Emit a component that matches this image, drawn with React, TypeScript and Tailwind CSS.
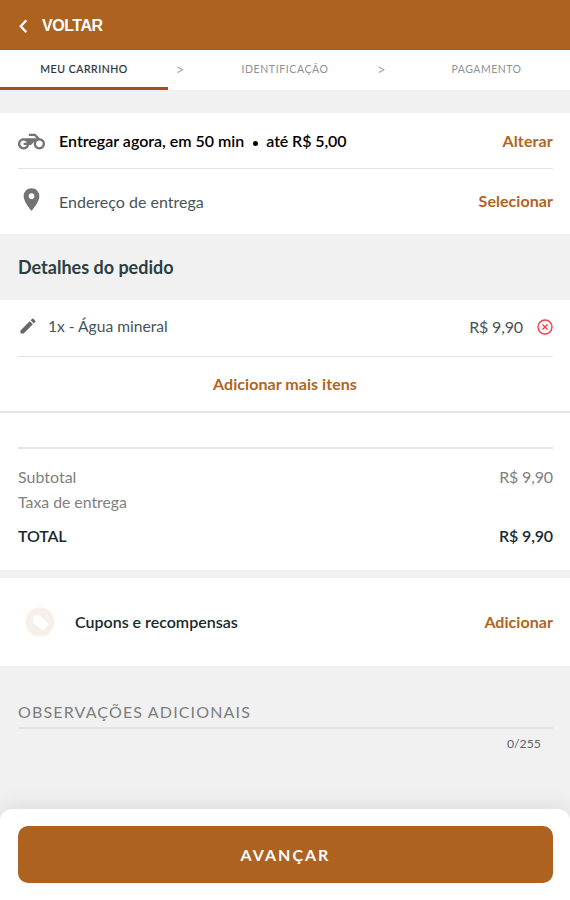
import React from "react";
import { MdPlace, MdEdit } from "react-icons/md";

function Motorcycle() {
  return (
    <svg width="27" height="27" viewBox="0 0 24 24" fill="#737373" className="mt-[2px]">
      <path d="M19.44 9.03L15.41 5H9.6v2h4.99l2 2H5c-2.8 0-5 2.2-5 5s2.2 5 5 5c2.46 0 4.45-1.69 4.9-4h1.65l2.77-2.77c-.21.54-.32 1.14-.32 1.77 0 2.8 2.2 5 5 5s5-2.2 5-5c0-2.65-1.97-4.77-4.56-4.97zM7.82 15C7.4 16.15 6.28 17 5 17c-1.63 0-3-1.37-3-3s1.37-3 3-3c1.28 0 2.4.85 2.82 2H5v2h2.82zM19 17c-1.66 0-3-1.34-3-3s1.34-3 3-3 3 1.34 3 3-1.34 3-3 3z" />
    </svg>
  );
}

function Header() {
  return (
    <header className="flex h-[50px] items-center bg-[#ad621f] pl-[19px] text-white">
      <svg width="9" height="15" viewBox="0 0 9 15" fill="none" stroke="currentColor" strokeWidth="2.4" className="mt-[3px]">
        <path d="M7.3 1.2 1.8 7.2l5.5 6" />
      </svg>
      <span className="ml-[14px] mt-px font-['Liberation_Sans',sans-serif] text-[16px] font-bold leading-5 tracking-[-0.45px]">VOLTAR</span>
    </header>
  );
}

function Steps() {
  return (
    <nav className="flex h-10 bg-white text-[10.5px] leading-[39px] text-[#8d9194]">
      <div className="h-10 w-[168px] border-b-[3px] border-[#a5501c] text-center tracking-[0.55px] text-[#27343a] [-webkit-text-stroke:0.2px]">MEU CARRINHO</div>
      <span className="w-6 text-center text-[15px] text-[#a9a9a9]">&gt;</span>
      <div className="w-[185px] pl-px text-center tracking-[0.6px]">IDENTIFICAÇÃO</div>
      <span className="w-2 text-[15px] text-[#a9a9a9]">&gt;</span>
      <div className="flex-1 pl-[18px] text-center tracking-[0.5px]">PAGAMENTO</div>
    </nav>
  );
}

export default function App() {
  return (
    <div className="flex h-[900px] w-[570px] flex-col overflow-hidden bg-[#f1f1f1] font-['Lato',sans-serif] text-[16px] leading-6 text-[#17292d]">
      <Header />
      <Steps />

      <section className="mt-[23px] h-[121px] bg-white pl-[18px] pr-[17px]">
        <div className="flex h-14 items-center border-b border-[#e3e3e3]">
          <Motorcycle />
          <span className="ml-[14px] mt-px font-semibold text-black">Entregar agora, em 50 min</span>
          <span className="ml-[9px] mt-[5px] h-[5px] w-[5px] rounded-full bg-black" />
          <span className="ml-2 mt-px font-semibold tracking-[-0.1px] text-black">até R$ 5,00</span>
          <span className="ml-auto mt-px font-bold tracking-[0.15px] text-[#b1641d]">Alterar</span>
        </div>
        <div className="flex h-[65px] items-center">
          <MdPlace size={27} className="-mt-1 text-[#737373]" />
          <span className="ml-[14px] text-[16px] text-[#465457]">Endereço de entrega</span>
          <span className="-mt-px ml-auto font-bold tracking-[0.05px] text-[#b1641d]">Selecionar</span>
        </div>
      </section>

      <h2 className="h-[66px] pl-[18px] text-[18px] font-bold leading-[66px] text-[#2c3e42]">Detalhes do pedido</h2>

      <section className="h-[270px] bg-white">
        <div className="ml-[18px] mr-[17px] flex h-[57px] items-center border-b border-[#e4e4e4] text-[#465457]">
          <MdEdit size={20} className="-mt-1 text-[#666]" />
          <span className="-mt-1 ml-[10px] text-[15.6px]">1x - Água mineral</span>
          <span className="-mt-[3px] ml-auto tracking-[-0.15px]">R$ 9,90</span>
          <svg width="16" height="16" viewBox="0 0 16 16" fill="none" stroke="#f83c46" strokeWidth="1.4" className="-mt-[2px] ml-[14px]">
            <circle cx="8" cy="8" r="7" />
            <path d="m5.5 5.5 5 5m0-5-5 5" />
          </svg>
        </div>
        <button className="block h-14 w-full border-b-2 border-[#e5e5e5] text-center font-bold tracking-[0.05px] text-[#b1641d]">Adicionar mais itens</button>
        <div className="ml-[18px] mr-[17px] mt-[34px] border-t-2 border-[#e7e7e7] pt-4 text-[#808080]">
          <div className="flex h-[25px] justify-between"><span>Subtotal</span><span className="tracking-[-0.15px]">R$ 9,90</span></div>
          <div className="h-[25px] text-[15.8px]">Taxa de entrega</div>
          <div className="mt-[9px] flex justify-between font-semibold tracking-[-0.15px] text-[#17292d]"><span>TOTAL</span><span>R$ 9,90</span></div>
        </div>
      </section>

      <section className="mt-2 flex h-[88px] items-center bg-white pl-[18px] pr-[17px]">
        <svg width="30" height="30" viewBox="0 0 30 30" className="ml-[7px]">
          <circle cx="15" cy="15" r="14.5" fill="#f6f0e9" />
          <path d="M8 10.4v5.1l8.5 7.3q1.2.8 2.2-.2l4.1-4q1-1.2 0-2.3L15 8.4h-5Q8 8.4 8 10.4Z" fill="#fff" />
        </svg>
        <span className="ml-5 font-semibold">Cupons e recompensas</span>
        <span className="ml-auto font-bold tracking-[0.05px] text-[#b1641d]">Adicionar</span>
      </section>

      <section className="ml-[18px] mr-[17px] h-[143px] pt-[34px]">
        <div className="h-[29px] border-b-2 border-[#e3e3e3] tracking-[1.15px] text-[#7d7d7d]">OBSERVAÇÕES ADICIONAIS</div>
        <div className="pr-3 pt-1 text-right text-[12.3px] leading-[22px] text-[#626262]">0/255</div>
      </section>

      <footer className="h-[91px] rounded-t-[12px] bg-white pl-[18px] pr-[17px] pt-[17px] shadow-[0_-2px_22px_rgba(0,0,0,0.1)]">
        <button className="h-[57px] w-full rounded-[10px] bg-[#ad621f] text-center font-bold tracking-[2px] text-white">AVANÇAR</button>
      </footer>
    </div>
  );
}
